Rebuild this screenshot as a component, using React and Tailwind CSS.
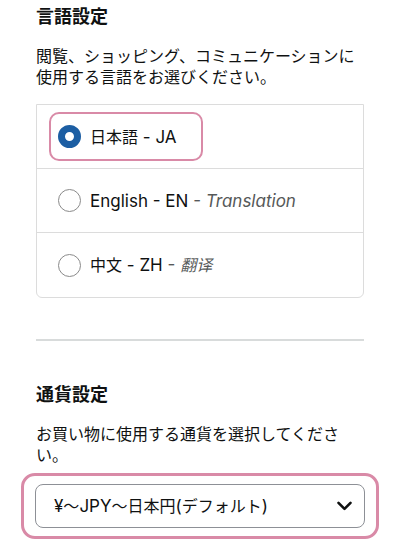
import React from 'react';

const font = { fontFamily: 'Inter, "Noto Sans CJK JP", sans-serif' };

function Radio({ checked }) {
  if (checked) {
    return <span className="block w-[23px] h-[23px] rounded-full border-[7px] border-[#1c5ea3] bg-white shrink-0" />;
  }
  return <span className="block w-[23px] h-[23px] rounded-full border border-[#8a8a8a] bg-white shrink-0" />;
}

// CJK runs are a touch smaller than the latin text next to them
function J({ children }) {
  return <span className="text-[16px]">{children}</span>;
}

export default function App() {
  const langs = [
    { name: '日本語', code: 'JA', note: null, checked: true },
    { name: 'English', code: 'EN', note: 'Translation', checked: false },
    { name: '中文', code: 'ZH', note: '翻译', checked: false },
  ];

  return (
    <div className="w-[400px] h-[548px] bg-white overflow-hidden px-[36px] pt-[5px] text-[#0f1111]" style={font}>
      {/* 言語設定 */}
      <h2 className="text-[18px] leading-[24px] font-bold">言語設定</h2>
      <p className="mt-[17px] text-[16px] leading-[21px]">
        閲覧、ショッピング、コミュニケーションに使用する言語をお選びください。
      </p>

      <div className="mt-[16px] border border-[#dcdcdc] rounded-b-[6px]">
        {langs.map((l, i) => (
          <div
            key={i}
            className={`h-[64px] flex items-center ${i < langs.length - 1 ? 'border-b border-[#dcdcdc]' : ''}`}
          >
            {l.checked ? (
              <div className="ml-[12px] h-[49px] flex items-center gap-[9px] pl-[7px] pr-[24px] border-2 border-[#d98aa7] rounded-[10px]">
                <Radio checked />
                <span className="text-[17px] leading-[22px]"><J>{l.name}</J> - {l.code}</span>
              </div>
            ) : (
              <div className="ml-[21px] flex items-center gap-[9px]">
                <Radio />
                <span className="text-[17px] leading-[22px]">
                  {l.name === 'English' ? l.name : <J>{l.name}</J>} - {l.code}
                  <span className="text-[#565959]"> - <i>{l.note === 'Translation' ? l.note : <J>{l.note}</J>}</i></span>
                </span>
              </div>
            )}
          </div>
        ))}
      </div>

      <div className="mt-[41px] h-[2px] bg-[#d8dbdb]" />

      {/* 通貨設定 */}
      <h2 className="mt-[42px] text-[18px] leading-[24px] font-bold">通貨設定</h2>
      <p className="mt-[17px] text-[16px] leading-[21px]">
        お買い物に使用する通貨を選択してください。
      </p>

      <div className="mt-[7px] -mx-[15px] px-[11px] py-[8px] border-[3px] border-[#d98aa7] rounded-[14px]">
        <div className="h-[44px] flex items-center justify-between pl-[18px] pr-[12px] border border-[#8d9096] rounded-[8px] bg-white">
          <span className="text-[17px] leading-[22px]">¥<J>～</J>JPY<J>～日本円</J>(<J>デフォルト</J>)</span>
          <svg width="15" height="10" viewBox="0 0 15 10" fill="none">
            <path d="M1.5 1.8 L7.5 7.8 L13.5 1.8" stroke="#0f1111" strokeWidth="2.6" strokeLinecap="round" strokeLinejoin="round" />
          </svg>
        </div>
      </div>
    </div>
  );
}
